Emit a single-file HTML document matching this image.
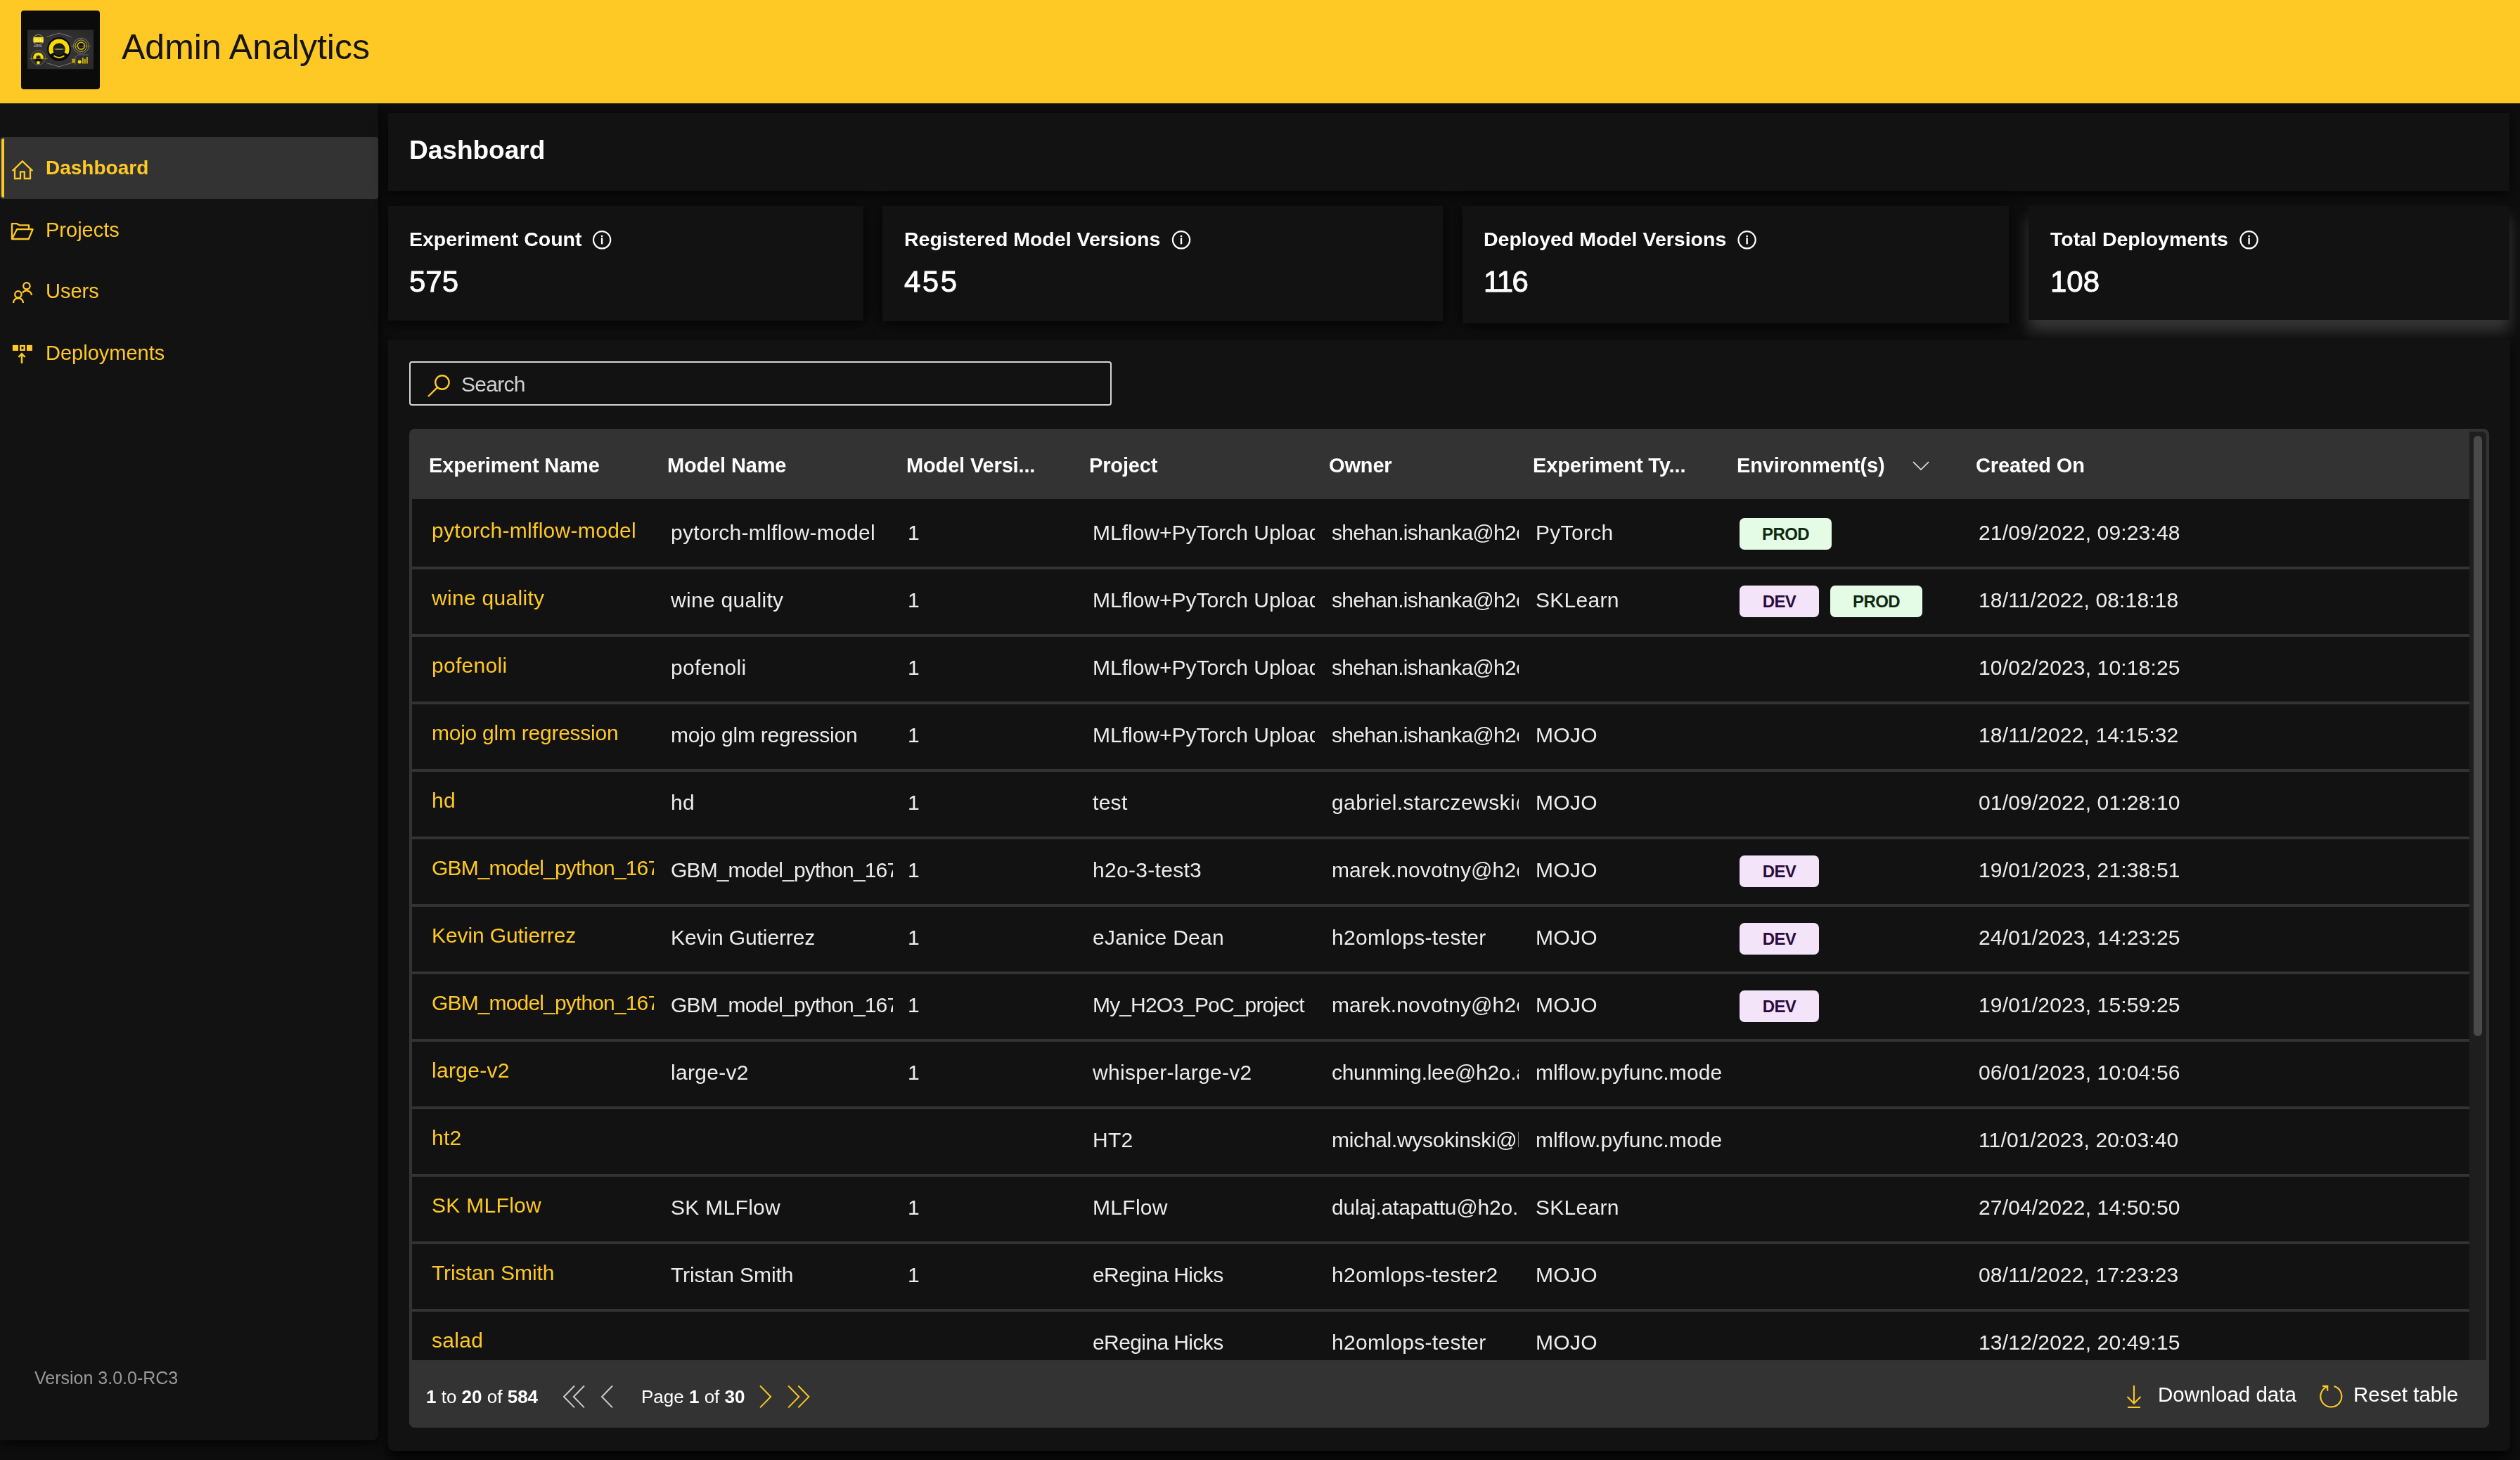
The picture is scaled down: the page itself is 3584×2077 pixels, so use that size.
<!DOCTYPE html>
<html><head><meta charset="utf-8">
<style>
html,body{margin:0;padding:0;}
body{width:3584px;height:2077px;overflow:hidden;background:#0e0e0e;position:relative;font-family:"Liberation Sans",sans-serif;}
.t{position:absolute;white-space:nowrap;line-height:1;will-change:transform;}
.abs{position:absolute;}
.panel{position:absolute;background:#121212;border-radius:0;box-shadow:0 4px 18px rgba(0,0,0,0.85);}
#header{position:absolute;left:0;top:0;width:3584px;height:147px;background:#FEC925;z-index:5;}
#title{color:#111;}
.nav{color:#FEC925;}
.stitle{color:#fff;font-weight:700;}
.snum{color:#fff;font-weight:400;-webkit-text-stroke:0.9px #fff;}
#table{position:absolute;left:582px;top:610px;width:2958px;height:1421px;background:#333;border-radius:8px;overflow:hidden;}
#rows{position:absolute;left:4px;top:100px;width:2926px;height:1225px;background:#121212;}
.row{position:absolute;left:4px;width:2926px;height:92px;border-bottom:4px solid #333;}
.clip{position:absolute;overflow:hidden;}
.cell{color:#ececec;letter-spacing:0.3px;}
.link{color:#FEC925;letter-spacing:0.3px;}
.hd{color:#fff;font-weight:700;}
.badge{position:absolute;height:45px;line-height:45px;border-radius:7px;font-size:24px;font-weight:700;text-align:center;letter-spacing:-0.6px;}
.dev{background:#f3e4f9;color:#2b0b40;}
.prod{background:#e4fbe6;color:#0f2a10;}
#track{position:absolute;left:2930px;top:4px;width:24px;height:1321px;background:#1e1e1e;border-top-right-radius:6px;}
#thumb{position:absolute;left:2936px;top:10px;width:12px;height:854px;background:#4a4a4a;border-radius:6px;}
#foot{position:absolute;left:0;top:1325px;width:2958px;height:96px;background:#333;}
.ft{color:#fff;}
</style></head><body>
<div id="header">
  <div class="abs" style="left:30px;top:15px;width:112px;height:112px;background:#0b0b0b;border-radius:4px;overflow:hidden;">
   <svg width="112" height="112" viewBox="0 0 112 112">
    <defs><radialGradient id="lg" cx="50%" cy="50%" r="60%"><stop offset="0" stop-color="#3a3a3a"/><stop offset="1" stop-color="#2a2a2a"/></radialGradient></defs>
    <rect x="9" y="27.4" width="94" height="55.8" fill="url(#lg)"/>
    <path d="M36.5 37.4 L54 32.2 L71.6 37.4 M36.5 74.6 L54 79.8 L71.6 74.6" stroke="#8a8a8a" stroke-width="0.8" fill="none"/>
    <circle cx="54" cy="55" r="17" fill="#0a0a0a"/>
    <path d="M44.06 60.97 A11.6 11.6 0 1 1 63.94 60.97" stroke="#f7dc00" stroke-width="6" fill="none"/>
    <path d="M61.49 64.25 A11.9 11.9 0 0 1 46.51 64.25" stroke="#e8c800" stroke-width="2" fill="none"/>
    <circle cx="54" cy="55" r="8.6" fill="#1e1e1e"/>
    <rect x="49" y="54" width="10" height="2" fill="#777"/>
    <path d="M46 55 H62" stroke="#b89a00" stroke-width="0.6"/>
    <circle cx="24.5" cy="41.7" r="7.3" fill="#2a2a2a" stroke="#bbb" stroke-width="0.8"/>
    <rect x="17.7" y="37.8" width="14" height="7.7" fill="#f7dc00"/>
    <path d="M20 44.5 V40 M22.5 44.5 V39 M25 44.5 V41 M27.5 44.5 V39.5 M30 44.5 V42" stroke="#fff" stroke-width="0.8"/>
    <path d="M18 50.5 H30" stroke="#ddd" stroke-width="1.5" stroke-dasharray="1.5 0.8"/>
    <circle cx="24.5" cy="67" r="10.3" fill="none" stroke="#777" stroke-width="0.7"/>
    <path d="M19.52 68.81 A5.3 5.3 0 1 1 29.48 68.81" stroke="#f7dc00" stroke-width="4" fill="none"/>
    <path d="M19 72 L24.5 66 L30 72 Z" fill="#0a0a0a"/>
    <path d="M12 68.5 H37.8" stroke="#b89a00" stroke-width="0.6"/>
    <circle cx="24.5" cy="74.2" r="2.3" fill="#f7dc00"/>
    <circle cx="85.3" cy="50.2" r="11" fill="none" stroke="#888" stroke-width="0.8"/>
    <circle cx="85.3" cy="50.2" r="8.3" fill="none" stroke="#d8b800" stroke-width="0.9"/>
    <circle cx="85.3" cy="50.2" r="5" fill="none" stroke="#f0d000" stroke-width="1.2"/>
    <circle cx="85.3" cy="50.2" r="3.2" fill="#111"/>
    <path d="M70.3 50.8 H99.9" stroke="#b89a00" stroke-width="0.6"/>
    <path d="M77 77 V66 L81 63 H96" stroke="#777" stroke-width="0.7" fill="none"/>
    <circle cx="83.2" cy="72.9" r="2.5" fill="#f7dc00"/>
    <rect x="87" y="67" width="1.8" height="8.5" fill="#d8b800"/>
    <rect x="90" y="69" width="1.8" height="6.5" fill="#d8b800"/>
    <rect x="93" y="66" width="1.8" height="9.5" fill="#d8b800"/>
    <rect x="72" y="68.6" width="5" height="6" fill="#b89a00"/>
   </svg>
  </div>
  <div class="t " style="left:173px;top:41.50px;font-size:50px;color:#141414;">Admin Analytics</div>
</div>

<div class="panel" id="sidebar" style="left:0;top:147px;width:538px;height:1902px;border-radius:0 0 8px 0;"></div>
<div class="abs" style="left:0;top:195px;width:538px;height:88px;background:#333;border-radius:4px;"></div>
<div class="abs" style="left:2px;top:197px;width:4px;height:84px;background:#FEC925;border-radius:3px 0 0 3px;"></div>
<div class="t nav" style="left:65px;top:225.20px;font-size:28px;font-weight:700;">Dashboard</div>
<div class="t nav" style="left:65px;top:312.65px;font-size:29px;">Projects</div>
<div class="t nav" style="left:65px;top:400.35px;font-size:29px;">Users</div>
<div class="t nav" style="left:65px;top:488.35px;font-size:29px;">Deployments</div>
<div class="t " style="left:49px;top:1947.75px;font-size:25px;color:#9a9a9a;">Version 3.0.0-RC3</div>

<div class="panel" style="left:552px;top:161px;width:3017px;height:111px;"></div>
<div class="t " style="left:582px;top:194.55px;font-size:37px;color:#fff;font-weight:700;">Dashboard</div>

<div class="panel" style="left:552px;top:293px;width:676px;height:163px;"></div>
<div class="panel" style="left:1255px;top:293px;width:797px;height:164px;"></div>
<div class="panel" style="left:2080px;top:293px;width:777px;height:167px;"></div>
<div class="panel" style="left:2885px;top:293px;width:684px;height:162px;box-shadow:0 16px 20px rgba(255,255,255,0.17);"></div>
<div class="t stitle" style="left:582px;top:325.77px;font-size:28.5px;">Experiment Count</div>
<div class="t stitle" style="left:1286px;top:325.77px;font-size:28.5px;">Registered Model Versions</div>
<div class="t stitle" style="left:2110px;top:325.77px;font-size:28.5px;">Deployed Model Versions</div>
<div class="t stitle" style="left:2916px;top:325.77px;font-size:28.5px;">Total Deployments</div>
<div class="t snum" style="left:582px;top:380.30px;font-size:42px;">575</div>
<div class="t snum" style="left:1286px;top:380.30px;font-size:42px;letter-spacing:2.5px;">455</div>
<div class="t snum" style="left:2110px;top:380.30px;font-size:42px;letter-spacing:-1.6px;">116</div>
<div class="t snum" style="left:2916px;top:380.30px;font-size:42px;">108</div>

<div class="panel" style="left:552px;top:484px;width:3018px;height:1580px;border-radius:0 0 8px 8px;box-shadow:0 12px 16px rgba(0,0,0,0.8);"></div>
<div class="abs" style="left:582px;top:514px;width:995px;height:59px;border:2.5px solid #d6d6d6;border-radius:4px;"></div>
<div class="t " style="left:656px;top:531.80px;font-size:30px;color:#d0d0d0;letter-spacing:-0.7px;">Search</div>

<div id="table">
  <div class="t hd" style="left:28px;top:37.85px;font-size:29px;letter-spacing:-0.15px;">Experiment Name</div><div class="t hd" style="left:367px;top:37.85px;font-size:29px;letter-spacing:-0.15px;">Model Name</div><div class="t hd" style="left:707px;top:37.85px;font-size:29px;letter-spacing:-0.15px;">Model Versi...</div><div class="t hd" style="left:967px;top:37.85px;font-size:29px;letter-spacing:-0.15px;">Project</div><div class="t hd" style="left:1308px;top:37.85px;font-size:29px;letter-spacing:-0.15px;">Owner</div><div class="t hd" style="left:1598px;top:37.85px;font-size:29px;letter-spacing:-0.15px;">Experiment Ty...</div><div class="t hd" style="left:1888px;top:37.85px;font-size:29px;letter-spacing:-0.15px;">Environment(s)</div><div class="t hd" style="left:2228px;top:37.85px;font-size:29px;letter-spacing:-0.15px;">Created On</div>
  <div id="rows"></div>
  <div class="row" style="top:104px"></div><div class="clip" style="left:4px;top:104px;width:344px;height:92px"><div class="t link" style="left:28px;top:26.00px;font-size:30px">pytorch-mlflow-model</div></div><div class="clip" style="left:348px;top:104px;width:340px;height:92px"><div class="t cell" style="left:24px;top:28.80px;font-size:30px">pytorch-mlflow-model</div></div><div class="clip" style="left:688px;top:104px;width:260px;height:92px"><div class="t cell" style="left:21px;top:28.80px;font-size:30px">1</div></div><div class="clip" style="left:948px;top:104px;width:340px;height:92px"><div class="t cell" style="left:24px;top:28.80px;font-size:30px;letter-spacing:0.0px">MLflow+PyTorch Upload</div></div><div class="clip" style="left:1288px;top:104px;width:290px;height:92px"><div class="t cell" style="left:24px;top:28.80px;font-size:30px;letter-spacing:-0.7px">shehan.ishanka@h2o.ai</div></div><div class="clip" style="left:1578px;top:104px;width:290px;height:92px"><div class="t cell" style="left:24px;top:28.80px;font-size:30px">PyTorch</div></div><div class="badge prod" style="left:1892px;top:127px;width:131px">PROD</div><div class="clip" style="left:2208px;top:104px;width:722px;height:92px"><div class="t cell" style="left:24px;top:28.80px;font-size:30px;letter-spacing:0.15px">21/09/2022, 09:23:48</div></div><div class="row" style="top:200px"></div><div class="clip" style="left:4px;top:200px;width:344px;height:92px"><div class="t link" style="left:28px;top:26.00px;font-size:30px">wine quality</div></div><div class="clip" style="left:348px;top:200px;width:340px;height:92px"><div class="t cell" style="left:24px;top:28.80px;font-size:30px">wine quality</div></div><div class="clip" style="left:688px;top:200px;width:260px;height:92px"><div class="t cell" style="left:21px;top:28.80px;font-size:30px">1</div></div><div class="clip" style="left:948px;top:200px;width:340px;height:92px"><div class="t cell" style="left:24px;top:28.80px;font-size:30px;letter-spacing:0.0px">MLflow+PyTorch Upload</div></div><div class="clip" style="left:1288px;top:200px;width:290px;height:92px"><div class="t cell" style="left:24px;top:28.80px;font-size:30px;letter-spacing:-0.7px">shehan.ishanka@h2o.ai</div></div><div class="clip" style="left:1578px;top:200px;width:290px;height:92px"><div class="t cell" style="left:24px;top:28.80px;font-size:30px">SKLearn</div></div><div class="badge dev" style="left:1892px;top:223px;width:113px">DEV</div><div class="badge prod" style="left:2021px;top:223px;width:131px">PROD</div><div class="clip" style="left:2208px;top:200px;width:722px;height:92px"><div class="t cell" style="left:24px;top:28.80px;font-size:30px;letter-spacing:0.15px">18/11/2022, 08:18:18</div></div><div class="row" style="top:296px"></div><div class="clip" style="left:4px;top:296px;width:344px;height:92px"><div class="t link" style="left:28px;top:26.00px;font-size:30px">pofenoli</div></div><div class="clip" style="left:348px;top:296px;width:340px;height:92px"><div class="t cell" style="left:24px;top:28.80px;font-size:30px">pofenoli</div></div><div class="clip" style="left:688px;top:296px;width:260px;height:92px"><div class="t cell" style="left:21px;top:28.80px;font-size:30px">1</div></div><div class="clip" style="left:948px;top:296px;width:340px;height:92px"><div class="t cell" style="left:24px;top:28.80px;font-size:30px;letter-spacing:0.0px">MLflow+PyTorch Upload</div></div><div class="clip" style="left:1288px;top:296px;width:290px;height:92px"><div class="t cell" style="left:24px;top:28.80px;font-size:30px;letter-spacing:-0.7px">shehan.ishanka@h2o.ai</div></div><div class="clip" style="left:2208px;top:296px;width:722px;height:92px"><div class="t cell" style="left:24px;top:28.80px;font-size:30px;letter-spacing:0.15px">10/02/2023, 10:18:25</div></div><div class="row" style="top:392px"></div><div class="clip" style="left:4px;top:392px;width:344px;height:92px"><div class="t link" style="left:28px;top:26.00px;font-size:30px;letter-spacing:-0.25px">mojo glm regression</div></div><div class="clip" style="left:348px;top:392px;width:340px;height:92px"><div class="t cell" style="left:24px;top:28.80px;font-size:30px;letter-spacing:-0.25px">mojo glm regression</div></div><div class="clip" style="left:688px;top:392px;width:260px;height:92px"><div class="t cell" style="left:21px;top:28.80px;font-size:30px">1</div></div><div class="clip" style="left:948px;top:392px;width:340px;height:92px"><div class="t cell" style="left:24px;top:28.80px;font-size:30px;letter-spacing:0.0px">MLflow+PyTorch Upload</div></div><div class="clip" style="left:1288px;top:392px;width:290px;height:92px"><div class="t cell" style="left:24px;top:28.80px;font-size:30px;letter-spacing:-0.7px">shehan.ishanka@h2o.ai</div></div><div class="clip" style="left:1578px;top:392px;width:290px;height:92px"><div class="t cell" style="left:24px;top:28.80px;font-size:30px">MOJO</div></div><div class="clip" style="left:2208px;top:392px;width:722px;height:92px"><div class="t cell" style="left:24px;top:28.80px;font-size:30px;letter-spacing:0.15px">18/11/2022, 14:15:32</div></div><div class="row" style="top:488px"></div><div class="clip" style="left:4px;top:488px;width:344px;height:92px"><div class="t link" style="left:28px;top:26.00px;font-size:30px">hd</div></div><div class="clip" style="left:348px;top:488px;width:340px;height:92px"><div class="t cell" style="left:24px;top:28.80px;font-size:30px">hd</div></div><div class="clip" style="left:688px;top:488px;width:260px;height:92px"><div class="t cell" style="left:21px;top:28.80px;font-size:30px">1</div></div><div class="clip" style="left:948px;top:488px;width:340px;height:92px"><div class="t cell" style="left:24px;top:28.80px;font-size:30px">test</div></div><div class="clip" style="left:1288px;top:488px;width:290px;height:92px"><div class="t cell" style="left:24px;top:28.80px;font-size:30px;letter-spacing:0.4px">gabriel.starczewski@h2o.ai</div></div><div class="clip" style="left:1578px;top:488px;width:290px;height:92px"><div class="t cell" style="left:24px;top:28.80px;font-size:30px">MOJO</div></div><div class="clip" style="left:2208px;top:488px;width:722px;height:92px"><div class="t cell" style="left:24px;top:28.80px;font-size:30px;letter-spacing:0.15px">01/09/2022, 01:28:10</div></div><div class="row" style="top:584px"></div><div class="clip" style="left:4px;top:584px;width:344px;height:92px"><div class="t link" style="left:28px;top:26.00px;font-size:30px;letter-spacing:-0.85px">GBM_model_python_1674</div></div><div class="clip" style="left:348px;top:584px;width:340px;height:92px"><div class="t cell" style="left:24px;top:28.80px;font-size:30px;letter-spacing:-0.85px">GBM_model_python_1674</div></div><div class="clip" style="left:688px;top:584px;width:260px;height:92px"><div class="t cell" style="left:21px;top:28.80px;font-size:30px">1</div></div><div class="clip" style="left:948px;top:584px;width:340px;height:92px"><div class="t cell" style="left:24px;top:28.80px;font-size:30px">h2o-3-test3</div></div><div class="clip" style="left:1288px;top:584px;width:290px;height:92px"><div class="t cell" style="left:24px;top:28.80px;font-size:30px;letter-spacing:0.1px">marek.novotny@h2o.ai</div></div><div class="clip" style="left:1578px;top:584px;width:290px;height:92px"><div class="t cell" style="left:24px;top:28.80px;font-size:30px">MOJO</div></div><div class="badge dev" style="left:1892px;top:607px;width:113px">DEV</div><div class="clip" style="left:2208px;top:584px;width:722px;height:92px"><div class="t cell" style="left:24px;top:28.80px;font-size:30px;letter-spacing:0.15px">19/01/2023, 21:38:51</div></div><div class="row" style="top:680px"></div><div class="clip" style="left:4px;top:680px;width:344px;height:92px"><div class="t link" style="left:28px;top:26.00px;font-size:30px;letter-spacing:-0.1px">Kevin Gutierrez</div></div><div class="clip" style="left:348px;top:680px;width:340px;height:92px"><div class="t cell" style="left:24px;top:28.80px;font-size:30px;letter-spacing:-0.1px">Kevin Gutierrez</div></div><div class="clip" style="left:688px;top:680px;width:260px;height:92px"><div class="t cell" style="left:21px;top:28.80px;font-size:30px">1</div></div><div class="clip" style="left:948px;top:680px;width:340px;height:92px"><div class="t cell" style="left:24px;top:28.80px;font-size:30px">eJanice Dean</div></div><div class="clip" style="left:1288px;top:680px;width:290px;height:92px"><div class="t cell" style="left:24px;top:28.80px;font-size:30px">h2omlops-tester</div></div><div class="clip" style="left:1578px;top:680px;width:290px;height:92px"><div class="t cell" style="left:24px;top:28.80px;font-size:30px">MOJO</div></div><div class="badge dev" style="left:1892px;top:703px;width:113px">DEV</div><div class="clip" style="left:2208px;top:680px;width:722px;height:92px"><div class="t cell" style="left:24px;top:28.80px;font-size:30px;letter-spacing:0.15px">24/01/2023, 14:23:25</div></div><div class="row" style="top:776px"></div><div class="clip" style="left:4px;top:776px;width:344px;height:92px"><div class="t link" style="left:28px;top:26.00px;font-size:30px;letter-spacing:-0.85px">GBM_model_python_1674</div></div><div class="clip" style="left:348px;top:776px;width:340px;height:92px"><div class="t cell" style="left:24px;top:28.80px;font-size:30px;letter-spacing:-0.85px">GBM_model_python_1674</div></div><div class="clip" style="left:688px;top:776px;width:260px;height:92px"><div class="t cell" style="left:21px;top:28.80px;font-size:30px">1</div></div><div class="clip" style="left:948px;top:776px;width:340px;height:92px"><div class="t cell" style="left:24px;top:28.80px;font-size:30px;letter-spacing:-0.85px">My_H2O3_PoC_project</div></div><div class="clip" style="left:1288px;top:776px;width:290px;height:92px"><div class="t cell" style="left:24px;top:28.80px;font-size:30px;letter-spacing:0.1px">marek.novotny@h2o.ai</div></div><div class="clip" style="left:1578px;top:776px;width:290px;height:92px"><div class="t cell" style="left:24px;top:28.80px;font-size:30px">MOJO</div></div><div class="badge dev" style="left:1892px;top:799px;width:113px">DEV</div><div class="clip" style="left:2208px;top:776px;width:722px;height:92px"><div class="t cell" style="left:24px;top:28.80px;font-size:30px;letter-spacing:0.15px">19/01/2023, 15:59:25</div></div><div class="row" style="top:872px"></div><div class="clip" style="left:4px;top:872px;width:344px;height:92px"><div class="t link" style="left:28px;top:26.00px;font-size:30px">large-v2</div></div><div class="clip" style="left:348px;top:872px;width:340px;height:92px"><div class="t cell" style="left:24px;top:28.80px;font-size:30px">large-v2</div></div><div class="clip" style="left:688px;top:872px;width:260px;height:92px"><div class="t cell" style="left:21px;top:28.80px;font-size:30px">1</div></div><div class="clip" style="left:948px;top:872px;width:340px;height:92px"><div class="t cell" style="left:24px;top:28.80px;font-size:30px">whisper-large-v2</div></div><div class="clip" style="left:1288px;top:872px;width:290px;height:92px"><div class="t cell" style="left:24px;top:28.80px;font-size:30px;letter-spacing:-0.3px">chunming.lee@h2o.ai</div></div><div class="clip" style="left:1578px;top:872px;width:290px;height:92px"><div class="t cell" style="left:24px;top:28.80px;font-size:30px;letter-spacing:0.1px">mlflow.pyfunc.model</div></div><div class="clip" style="left:2208px;top:872px;width:722px;height:92px"><div class="t cell" style="left:24px;top:28.80px;font-size:30px;letter-spacing:0.15px">06/01/2023, 10:04:56</div></div><div class="row" style="top:968px"></div><div class="clip" style="left:4px;top:968px;width:344px;height:92px"><div class="t link" style="left:28px;top:26.00px;font-size:30px">ht2</div></div><div class="clip" style="left:948px;top:968px;width:340px;height:92px"><div class="t cell" style="left:24px;top:28.80px;font-size:30px">HT2</div></div><div class="clip" style="left:1288px;top:968px;width:290px;height:92px"><div class="t cell" style="left:24px;top:28.80px;font-size:30px;letter-spacing:-0.3px">michal.wysokinski@h2o.ai</div></div><div class="clip" style="left:1578px;top:968px;width:290px;height:92px"><div class="t cell" style="left:24px;top:28.80px;font-size:30px;letter-spacing:0.1px">mlflow.pyfunc.model</div></div><div class="clip" style="left:2208px;top:968px;width:722px;height:92px"><div class="t cell" style="left:24px;top:28.80px;font-size:30px;letter-spacing:0.15px">11/01/2023, 20:03:40</div></div><div class="row" style="top:1064px"></div><div class="clip" style="left:4px;top:1064px;width:344px;height:92px"><div class="t link" style="left:28px;top:26.00px;font-size:30px">SK MLFlow</div></div><div class="clip" style="left:348px;top:1064px;width:340px;height:92px"><div class="t cell" style="left:24px;top:28.80px;font-size:30px">SK MLFlow</div></div><div class="clip" style="left:688px;top:1064px;width:260px;height:92px"><div class="t cell" style="left:21px;top:28.80px;font-size:30px">1</div></div><div class="clip" style="left:948px;top:1064px;width:340px;height:92px"><div class="t cell" style="left:24px;top:28.80px;font-size:30px">MLFlow</div></div><div class="clip" style="left:1288px;top:1064px;width:290px;height:92px"><div class="t cell" style="left:24px;top:28.80px;font-size:30px;letter-spacing:-0.2px">dulaj.atapattu@h2o.ai</div></div><div class="clip" style="left:1578px;top:1064px;width:290px;height:92px"><div class="t cell" style="left:24px;top:28.80px;font-size:30px">SKLearn</div></div><div class="clip" style="left:2208px;top:1064px;width:722px;height:92px"><div class="t cell" style="left:24px;top:28.80px;font-size:30px;letter-spacing:0.15px">27/04/2022, 14:50:50</div></div><div class="row" style="top:1160px"></div><div class="clip" style="left:4px;top:1160px;width:344px;height:92px"><div class="t link" style="left:28px;top:26.00px;font-size:30px;letter-spacing:-0.1px">Tristan Smith</div></div><div class="clip" style="left:348px;top:1160px;width:340px;height:92px"><div class="t cell" style="left:24px;top:28.80px;font-size:30px;letter-spacing:-0.1px">Tristan Smith</div></div><div class="clip" style="left:688px;top:1160px;width:260px;height:92px"><div class="t cell" style="left:21px;top:28.80px;font-size:30px">1</div></div><div class="clip" style="left:948px;top:1160px;width:340px;height:92px"><div class="t cell" style="left:24px;top:28.80px;font-size:30px;letter-spacing:-0.6px">eRegina Hicks</div></div><div class="clip" style="left:1288px;top:1160px;width:290px;height:92px"><div class="t cell" style="left:24px;top:28.80px;font-size:30px">h2omlops-tester2</div></div><div class="clip" style="left:1578px;top:1160px;width:290px;height:92px"><div class="t cell" style="left:24px;top:28.80px;font-size:30px">MOJO</div></div><div class="clip" style="left:2208px;top:1160px;width:722px;height:92px"><div class="t cell" style="left:24px;top:28.80px;font-size:30px;letter-spacing:0.15px">08/11/2022, 17:23:23</div></div><div class="row" style="top:1256px"></div><div class="clip" style="left:4px;top:1256px;width:344px;height:92px"><div class="t link" style="left:28px;top:26.00px;font-size:30px">salad</div></div><div class="clip" style="left:948px;top:1256px;width:340px;height:92px"><div class="t cell" style="left:24px;top:28.80px;font-size:30px;letter-spacing:-0.6px">eRegina Hicks</div></div><div class="clip" style="left:1288px;top:1256px;width:290px;height:92px"><div class="t cell" style="left:24px;top:28.80px;font-size:30px">h2omlops-tester</div></div><div class="clip" style="left:1578px;top:1256px;width:290px;height:92px"><div class="t cell" style="left:24px;top:28.80px;font-size:30px">MOJO</div></div><div class="clip" style="left:2208px;top:1256px;width:722px;height:92px"><div class="t cell" style="left:24px;top:28.80px;font-size:30px;letter-spacing:0.15px">13/12/2022, 20:49:15</div></div>
  <div id="track"></div>
  <div id="thumb"></div>
  <div id="foot"></div>
</div>
<div class="t ft" style="left:606px;top:1973.90px;font-size:26px;"><b>1</b> to <b>20</b> of <b>584</b></div>
<div class="t ft" style="left:912px;top:1973.90px;font-size:26px;">Page <b>1</b> of <b>30</b></div>
<div class="t ft" style="left:3069px;top:1969.42px;font-size:29.5px;">Download data</div>
<div class="t ft" style="left:3347px;top:1969.42px;font-size:29.5px;">Reset table</div>

<svg class="abs" style="left:0;top:0;pointer-events:none" width="3584" height="2077" viewBox="0 0 3584 2077">
 <g fill="none" stroke="#FEC925" stroke-width="2.3" stroke-linejoin="miter" stroke-linecap="butt">
  <path d="M17.6 243.2 L31.9 229.4 L46.4 243.2"/>
  <path d="M21 240.5 V254 H29 V244.4 H34.8 V254 H43 V240.5"/>
  <path d="M17 340 V318.2 H24 L27.5 320.3 H41 V325.5" stroke-linejoin="round"/>
  <path d="M17 340 H40.7 L46.6 326.2 H24 Z" stroke-linejoin="round"/>
  <circle cx="37.9" cy="406.8" r="4.7"/>
  <path d="M32 416.5 A7.2 7.2 0 0 1 45 420"/>
  <circle cx="25.9" cy="418.8" r="4.7"/>
  <path d="M19 431 A7 7 0 0 1 33 431"/>
  <path d="M31 517 V503.5 M26.4 508 L31 503.2 L35.6 508" stroke-width="2.5"/>
 </g>
 <g fill="#FEC925">
  <rect x="17.9" y="490.9" width="8.1" height="8.1"/>
  <rect x="38" y="490.9" width="7.9" height="8.1"/>
 </g>
 <rect x="29.2" y="492.1" width="5.5" height="5.7" fill="none" stroke="#FEC925" stroke-width="2.4"/>
 <g fill="none" stroke="#fff" stroke-width="2.2">
  <circle cx="856.1" cy="341.3" r="12.1"/>
  <circle cx="1680" cy="341.3" r="12.1"/>
  <circle cx="2484.6" cy="341.3" r="12.1"/>
  <circle cx="3198.6" cy="341.3" r="12.1"/>
 </g>
 <g fill="#fff">
  <rect x="854.9" y="334.8" width="2.4" height="2.2"/><rect x="854.9" y="338.1" width="2.4" height="9.3"/>
  <rect x="1678.8" y="334.8" width="2.4" height="2.2"/><rect x="1678.8" y="338.1" width="2.4" height="9.3"/>
  <rect x="2483.4" y="334.8" width="2.4" height="2.2"/><rect x="2483.4" y="338.1" width="2.4" height="9.3"/>
  <rect x="3197.4" y="334.8" width="2.4" height="2.2"/><rect x="3197.4" y="338.1" width="2.4" height="9.3"/>
 </g>
 <g fill="none" stroke="#FEC925" stroke-width="2.4">
  <circle cx="628.9" cy="544" r="9.7"/>
  <path d="M621.6 551.6 L609 564"/>
 </g>
 <path d="M2721 657.1 L2732 668 L2743 657.1" fill="none" stroke="#ddd" stroke-width="1.7"/>
 <g fill="none" stroke="#cfcfcf" stroke-width="1.9">
  <path d="M817 1971.5 L801.9 1987 L817 2002.3"/>
  <path d="M830.9 1971.5 L815.8 1987 L830.9 2002.3"/>
  <path d="M871 1971.5 L856 1987 L871 2002.3"/>
 </g>
 <g fill="none" stroke="#FEC925" stroke-width="1.9">
  <path d="M1081.1 1971.5 L1096.2 1987 L1081.1 2002.3"/>
  <path d="M1121.2 1971.5 L1136.3 1987 L1121.2 2002.3"/>
  <path d="M1135.3 1971.5 L1150.4 1987 L1135.3 2002.3"/>
 </g>
 <g fill="none" stroke="#FEC925" stroke-width="2.1">
  <path d="M3035 1971 V1996 M3025.5 1987 L3035 1996.4 L3044.5 1987 M3026 2002 H3044"/>
  <path d="M3319.5 1972.1 A15 15 0 1 1 3310 1972.5"/>
  <path d="M3303.2 1971.8 H3310.2 V1978.8" stroke-width="2.2"/>
 </g>
</svg>
<script>(function(){var w=window.innerWidth;if(w&&Math.abs(w-3584)>4){document.documentElement.style.zoom=(w/3584);}})();</script>
</body></html>
